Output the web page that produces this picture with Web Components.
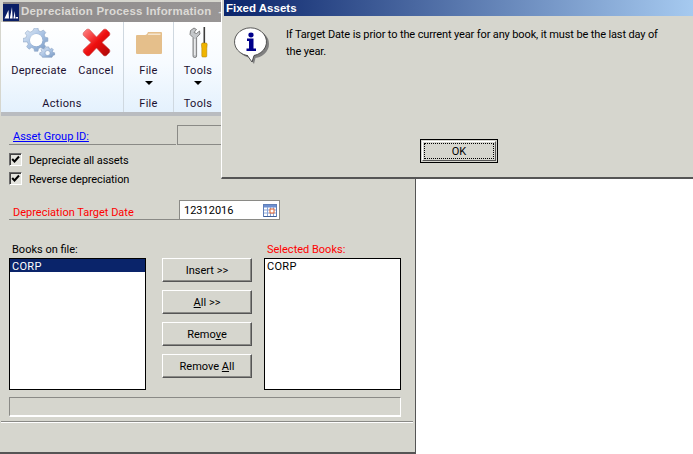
<!DOCTYPE html>
<html><head><meta charset="utf-8"><style>
html,body{margin:0;padding:0;background:#fff;overflow:hidden}
body{font:11px Roboto,"Liberation Sans",Arial,sans-serif;color:#000;width:693px;height:454px}
</style></head><body>
<desktop-screen>
<process-window>
  <ribbon-bar slot="ribbon"></ribbon-bar>
  <process-form slot="form"></process-form>
</process-window>
<alert-dialog heading="Fixed Assets">If Target Date is prior to the current year for any book, it must be the last day of the year.</alert-dialog>
</desktop-screen>
<script>
function def(name,css,html){
  customElements.define(name,class extends HTMLElement{
    connectedCallback(){
      if(this.shadowRoot)return;
      const r=this.attachShadow({mode:'open'});
      r.innerHTML='<style>'+css+'</style>'+(typeof html==='function'?html(this):html);
    }
  });
}
const FACE='#d6d6ce';
const UI='Roboto,"Liberation Sans",sans-serif';
def('desktop-screen',':host{display:block;position:relative;width:693px;height:454px;background:#fff;overflow:hidden}','<slot></slot>');

def('process-window',`:host{display:flex;flex-direction:column;position:absolute;left:0;top:0;width:416px;height:454px;box-sizing:border-box;background:${FACE};border-right:1px solid #555;border-bottom:2px solid #555;padding-top:2px}
.title{height:20px;margin-left:3px;display:flex;align-items:center;gap:2px;background:linear-gradient(90deg,#8d8a8a,#9a9797 60%,#b4b1b0);color:#dcdad6;font:bold 11.500px/1 "Liberation Sans",sans-serif;white-space:nowrap;overflow:hidden}
.logo{width:16px;height:17px;background:#0a1f66;flex:none;display:block}
.title span{letter-spacing:.2px}`,
`<div class="title"><svg class="logo" viewBox="0 0 16 17"><path d="M1.500 14.500 L5.500 6 L6 14.500Z M6.800 14.500 L9 3 L9.600 14.500Z M10.400 14.500 L11.800 7 L12.400 14.500Z M12.800 14.500 H15 V13 H12.800Z" fill="#fff"/></svg><span>Depreciation Process Information&nbsp;&nbsp;-</span></div><slot name="ribbon"></slot><slot name="form"></slot>`);

def('ribbon-bar',`:host{display:flex;height:90px;margin-left:1px;flex:none;box-sizing:content-box;border-bottom:4px solid #b9bcc0;background:linear-gradient(180deg,#fff 0,#f7fbff 45%,#e4f1fd 100%);color:#1c1030}`,
`<ribbon-group label="Actions" style="width:123px;--pad:5px">
<ribbon-btn label="Depreciate" style="width:66px"><svg width="33" height="30" viewBox="0 0 33 30"><defs><linearGradient id="g" x1="0" y1="0" x2="1" y2="1"><stop offset="0" stop-color="#e4edf8"/><stop offset=".55" stop-color="#a6c0e2"/><stop offset="1" stop-color="#7596c0"/></linearGradient></defs>
<g transform="translate(0 -1) scale(.88)"><path fill="url(#g)" stroke="#8ba2c0" stroke-width=".6" fill-rule="evenodd" d="M13 1h4l.7 3.200 2.600 1 2.800-1.800 2.800 2.800-1.800 2.800 1 2.600 3.200.7v4l-3.200.7-1 2.600 1.800 2.800-2.800 2.800-2.800-1.800-2.600 1-.7 3.200h-4l-.7-3.200-2.600-1-2.800 1.800-2.800-2.800 1.800-2.800-1-2.600L0 17v-4l3.200-.7 1-2.600L2.400 6.900 5.200 4.100 8 5.900l2.600-1zM15 8a7 7 0 1 0 0 14 7 7 0 0 0 0-14z"/><circle cx="15" cy="15" r="7" fill="#fff"/></g>
<g transform="translate(1 0) scale(.9)"><path fill="url(#g)" stroke="#6f8ab0" stroke-width=".5" fill-rule="evenodd" d="M25 21h2.500l.4 1.800 1.400.6 1.600-1 1.700 1.700-1 1.600.6 1.400 1.800.4V30l-1.800.4-.6 1.400-.6.800H20.500l-.6-.8-.6-1.400-1.800-.4v-2.500l1.800-.4.600-1.400-1-1.600 1.700-1.700 1.600 1 1.400-.6zM26.200 25a2.800 2.800 0 1 0 0 5.600 2.800 2.800 0 0 0 0-5.600z"/></g></svg></ribbon-btn>
<ribbon-btn label="Cancel" style="width:48px"><svg width="31" height="31" viewBox="0 0 31 31"><defs><linearGradient id="r" x1="0" y1="0" x2="1" y2="1"><stop offset="0" stop-color="#ff8a8a"/><stop offset=".5" stop-color="#ee0f0f"/><stop offset="1" stop-color="#a80808"/></linearGradient></defs><path fill="url(#r)" stroke="#d06060" stroke-width=".6" stroke-linejoin="round" d="M2.500 5.500 5.500 2.500q1.500-1 3 0L15.500 10 22.500 2.500q1.500-1 3 0l3 3q1 1.500 0 3L21 15.500l7.500 7q1 1.500 0 3l-3 3q-1.500 1-3 0L15.500 21 8.500 28.500q-1.500 1-3 0l-3-3q-1-1.500 0-3L10 15.500 2.500 8.500q-1-1.500 0-3z"/></svg></ribbon-btn>
</ribbon-group>
<ribbon-group label="File" style="width:50px"><ribbon-btn label="File" arrow style="width:49px"><svg width="26" height="22" viewBox="0 0 26 22"><path fill="#e5bf8b" d="M0 4q0-1 1-1h8q1 0 2-1l1-2h13q1 0 1 1v20q0 1-1 1H1q-1 0-1-1z"/><path fill="#f6e6cf" d="M12.500 1.500h12v1.600h-12.800z"/></svg></ribbon-btn></ribbon-group>
<ribbon-group label="Tools" style="width:49px"><ribbon-btn label="Tools" arrow style="width:48px"><svg width="19" height="31" viewBox="0 0 19 31"><path fill="#c4c7ca" stroke="#6a6a6a" stroke-width=".8" stroke-linejoin="round" d="M5 1 1.500 3.500 1 7.500l3 3V29q0 1.500 1.800 1.500T7.600 29V10.500L11 7 10.500 4 7.500 6.500 5 5.500 7.500 2.500z"/><path d="M5.800 12v16" stroke="#f2f2f2" stroke-width="1.200"/><rect x="14.500" y="0" width="1.600" height="16" fill="#3d3d3d"/><path d="M13 16h4.600l.6 1.500-.4 4v7.500q0 1-1 1h-3q-1 0-1-1v-7.500l-.4-4z" fill="#f0b400" stroke="#a67a00" stroke-width=".5"/></svg></ribbon-btn></ribbon-group>`);

def('ribbon-group',`:host{display:flex;flex-direction:column;box-sizing:border-box;border-right:1px solid #cfd8e0;flex:none;height:90px}
.b{display:flex;height:74px;padding-left:var(--pad,0)}
.l{text-align:center;font:11px/15px ${UI};letter-spacing:.3px}`,
h=>`<div class="b"><slot></slot></div><div class="l">${h.getAttribute('label')}</div>`);

def('ribbon-btn',`:host{display:flex;flex-direction:column;align-items:center;flex:none}
.i{height:39px;margin-top:1px;display:flex;align-items:center;justify-content:center;width:100%}
.t{margin-top:2px;font:11px/14px ${UI};letter-spacing:.3px}
.a{width:0;height:0;margin-top:3px;border:4px solid transparent;border-top-color:#000;border-bottom:0}`,
h=>`<div class="i"><slot></slot></div><div class="t">${h.getAttribute('label')}</div>${h.hasAttribute('arrow')?'<div class="a"></div>':''}`);

def('process-form',`:host{display:block;flex:1;padding:9px 0 0 9px;font:11px/13px ${UI};position:relative}
.r1{display:flex;height:20px}
.lab{box-sizing:border-box;border-bottom:1px solid #8a8a86;padding-left:4px;display:flex;align-items:flex-end;padding-bottom:1px}
.a{color:#00f;text-decoration:underline;width:167px;margin-right:1px;flex:none}
.gbox{box-sizing:border-box;width:240px;border:1px solid #8a8a86;border-right:0}
.checks{display:flex;flex-direction:column;gap:6px;margin-top:8px;letter-spacing:-.1px}
.r2{display:flex;height:20px;margin-top:15px}
.red{color:#f00;width:170px;flex:none;padding-bottom:0}
.date{box-sizing:border-box;width:101px;height:20px;border:1px solid #8a8a86;background:#fff;display:flex;align-items:center;justify-content:space-between;padding:0 2px 0 4px}
.grid{display:flex;margin-top:17px;width:392px}
.cap{height:21px;padding-left:3px;line-height:25px;overflow:hidden}
.cap.s{color:#f00}
.btns{display:flex;flex-direction:column;gap:8px;padding-top:21px;margin:0 12px 0 16px}
.status{box-sizing:border-box;width:392px;height:20px;margin-top:7px;border:1px solid #8a8a86;border-right-color:#fff;border-bottom:2px solid #fff}
.sep{margin:4px 2px 0 -8px;border-top:1px solid #8a8a86;border-bottom:1px solid #fff}`,
`<div class="r1"><div class="lab a">Asset Group ID:</div><div class="gbox"></div></div>
<div class="checks"><check-row>Depreciate all assets</check-row><check-row>Reverse depreciation</check-row></div>
<div class="r2"><div class="lab red">Depreciation Target Date</div><div class="date">12312016<svg width="14" height="13" viewBox="0 0 14 13"><rect x=".5" y=".5" width="13" height="12" fill="#fff" stroke="#5f7fb8"/><rect x="1" y="1" width="12" height="2.500" fill="#6d8fd0"/><path d="M1 6h12M1 9h12M4.500 3v9M7.500 3v9M10.500 3v9" stroke="#8aa6d8"/><rect x="7" y="5" width="4" height="4" fill="#fff" stroke="#e2602a"/><path d="M1 12.500h12" stroke="#3f5f98"/></svg></div></div>
<div class="grid">
<div><div class="cap">Books on file:</div><list-box selected>CORP</list-box></div>
<div class="btns"><win-btn>Insert &gt;&gt;</win-btn><win-btn><u>A</u>ll &gt;&gt;</win-btn><win-btn>Remo<u>v</u>e</win-btn><win-btn>Remove <u>A</u>ll</win-btn></div>
<div><div class="cap s">Selected Books:</div><list-box>CORP</list-box></div>
</div>
<div class="status"></div><div class="sep"></div>`);

def('check-row',`:host{display:flex;align-items:center;gap:7px;height:13px;white-space:nowrap}
.c{box-sizing:border-box;width:13px;height:13px;border:1px solid #6a6a6a;border-right-color:#fff;border-bottom-color:#fff;box-shadow:inset 1px 1px 0 #404040;background:#e4e4de;display:block;flex:none}
span{position:relative;top:1px}`,
`<svg class="c" viewBox="0 0 11 11"><path d="M2.200 5l2.300 2.500L9 2.500" fill="none" stroke="#000" stroke-width="2"/></svg><span><slot></slot></span>`);

def('list-box',`:host{display:block;box-sizing:border-box;width:137px;height:132px;border:1px solid #000;background:#fff;font:11px/15px ${UI};letter-spacing:.3px}
.row{height:13px;padding-left:2px}
:host([selected]) .row{background:#0a246a;color:#fff}`,`<div class="row"><slot></slot></div>`);

def('win-btn',`:host{display:flex;align-items:center;justify-content:center;box-sizing:border-box;width:90px;height:24px;background:${FACE};border:1px solid;border-color:#fff #555 #555 #fff;box-shadow:inset -1px -1px 0 #8a8a86;font:11px/13px ${UI};white-space:pre}`,`<slot></slot>`);

def('alert-dialog',`:host{display:block;position:absolute;left:221px;top:0;width:472px;height:179px;box-sizing:border-box;background:${FACE};border-left:1px solid #fff;border-bottom:2px solid #555}
.t{height:16px;margin-left:2px;background:linear-gradient(90deg,#0a246a,#a6caf0);color:#fff;font:bold 11.500px/16px "Liberation Sans",sans-serif;padding-left:2px}
.b{display:flex;padding:10px 0 0 11px;height:111px;box-sizing:border-box}
.i{flex:none;width:38px;height:38px}
.m{margin-left:15px;margin-top:0;width:376px;font:11px/17px ${UI};letter-spacing:-.13px}
.f{display:flex;padding:12px 0 0 198px}
.ok{box-sizing:border-box;width:78px;height:24px;border:1px solid #000;padding:1px;display:block}
.ok div{box-sizing:border-box;height:100%;border:1px solid;border-color:#fff #555 #555 #fff;padding:1px}
.ok span{display:flex;box-sizing:border-box;height:100%;align-items:center;justify-content:center;border:1px dotted #000;font:11px/1 ${UI}}`,
h=>`<div class="t">${h.getAttribute('heading')}</div><div class="b"><svg class="i" viewBox="0 0 38 38"><g fill="#808080" transform="translate(2 2)"><ellipse cx="18" cy="16" rx="16" ry="14"/><path d="M13 28l6 8 2-8z"/></g><path d="M14 29 19 36 21 29.500A16 14 0 1 0 14 29.500Z" fill="#fff" stroke="#333" stroke-width=".8"/><ellipse cx="18" cy="9" rx="2.600" ry="2.400" fill="#00008b"/><path d="M14 12.500h6.500v10h2.500v2.500H13.500v-2.500h2.500v-7.500h-2z" fill="#00008b"/></svg><div class="m"><slot></slot></div></div><div class="f"><div class="ok"><div><span>OK</span></div></div></div>`);
</script>
</body></html>
